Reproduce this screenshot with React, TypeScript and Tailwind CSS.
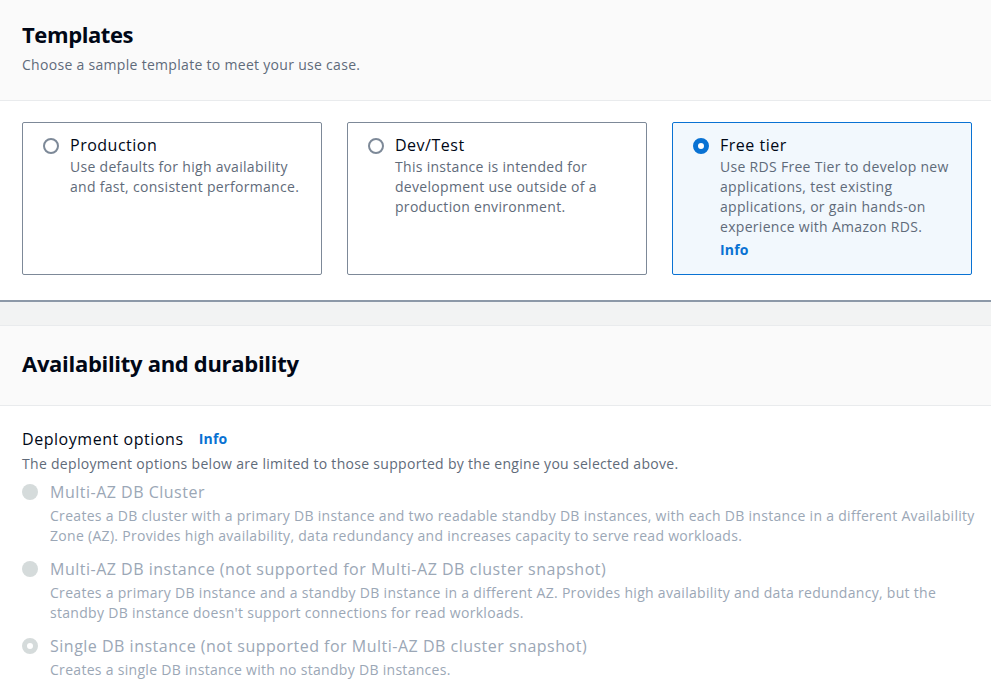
import React from 'react';

const templates = [
  {
    title: 'Production',
    desc: 'Use defaults for high availability and fast, consistent performance.',
    selected: false,
  },
  {
    title: 'Dev/Test',
    desc: 'This instance is intended for development use outside of a production environment.',
    selected: false,
  },
  {
    title: 'Free tier',
    desc: 'Use RDS Free Tier to develop new applications, test existing applications, or gain hands-on experience with Amazon RDS.',
    selected: true,
  },
];

const deployments = [
  {
    title: 'Multi-AZ DB Cluster',
    desc: 'Creates a DB cluster with a primary DB instance and two readable standby DB instances, with each DB instance in a different Availability Zone (AZ). Provides high availability, data redundancy and increases capacity to serve read workloads.',
    checked: false,
  },
  {
    title: 'Multi-AZ DB instance (not supported for Multi-AZ DB cluster snapshot)',
    desc: "Creates a primary DB instance and a standby DB instance in a different AZ. Provides high availability and data redundancy, but the standby DB instance doesn't support connections for read workloads.",
    checked: false,
  },
  {
    title: 'Single DB instance (not supported for Multi-AZ DB cluster snapshot)',
    desc: 'Creates a single DB instance with no standby DB instances.',
    checked: true,
  },
];

function Radio({ selected }: { selected: boolean }) {
  if (selected) {
    return <span className="block w-4 h-4 rounded-full border-[5px] border-[#0972d3] bg-white" />;
  }
  return <span className="block w-4 h-4 rounded-full border-2 border-[#7d8998] bg-white" />;
}

function DisabledRadio({ checked }: { checked: boolean }) {
  if (checked) {
    return <span className="block w-4 h-4 rounded-full border-[5px] border-[#d5dbdb] bg-white" />;
  }
  return <span className="block w-4 h-4 rounded-full bg-[#d5dbdb]" />;
}

export default function App() {
  return (
    <div className="w-[991px] h-[688px] overflow-hidden bg-white text-[#000716] font-['Open_Sans',sans-serif]">
      {/* Templates */}
      <div className="bg-[#fafafa] border-b border-[#e9ebed] px-[22px] pt-[19px] h-[101px]">
        <h2 className="text-[22px] leading-[30px] font-bold tracking-[-0.4px]">Templates</h2>
        <p className="text-sm leading-5 tracking-[0.3px] text-[#5f6b7a] mt-[6px]">
          Choose a sample template to meet your use case.
        </p>
      </div>
      <div className="grid grid-cols-[300px_300px_300px] gap-[25px] px-[22px] pt-[21px] pb-[25px] border-b-2 border-[#8d99a8]">
        {templates.map((t) => (
          <div
            key={t.title}
            className={`h-[153px] rounded-[2px] border flex gap-[11px] pl-[20px] pr-[14px] pt-[11px] ${
              t.selected ? 'border-[#0972d3] bg-[#f2f8fd]' : 'border-[#7d8998] bg-white'
            }`}
          >
            <div className="pt-[4px]">
              <Radio selected={t.selected} />
            </div>
            <div>
              <div className="text-base leading-[22px] tracking-[0.5px]">{t.title}</div>
              <p className="text-sm leading-5 tracking-[0.3px] text-[#5f6b7a] mt-[1px]">{t.desc}</p>
              {t.selected && (
                <a className="text-sm leading-5 font-bold tracking-[0.2px] text-[#0972d3]">Info</a>
              )}
            </div>
          </div>
        ))}
      </div>
      <div className="h-[23px] bg-[#f2f3f3]" />

      {/* Availability and durability */}
      <div className="bg-[#fafafa] border-y border-[#e9ebed] px-[22px] h-[81px] flex items-center">
        <h2 className="text-[22px] leading-[30px] font-bold tracking-[-0.3px] -mt-[5px]">
          Availability and durability
        </h2>
      </div>
      <div className="pl-[22px] pr-[6px] pt-[22px]">
        <div className="flex items-center gap-[15px]">
          <span className="text-base leading-[22px] tracking-[0.55px]">Deployment options</span>
          <a className="text-sm font-bold tracking-[0.2px] text-[#0972d3]">Info</a>
        </div>
        <p className="text-sm leading-5 tracking-[0.3px] text-[#5f6b7a] mt-[4px]">
          The deployment options below are limited to those supported by the engine you selected above.
        </p>
        <div className="flex flex-col gap-[11px] mt-[6px]">
          {deployments.map((d) => (
            <div key={d.title} className="flex gap-[12px]">
              <div className="pt-[4px]">
                <DisabledRadio checked={d.checked} />
              </div>
              <div>
                <div className="text-base leading-[24px] tracking-[0.5px] text-[#9ba7b6]">{d.title}</div>
                <p className="text-sm leading-5 tracking-[0.3px] text-[#9ba7b6] mt-[2px]">{d.desc}</p>
              </div>
            </div>
          ))}
        </div>
      </div>
    </div>
  );
}
